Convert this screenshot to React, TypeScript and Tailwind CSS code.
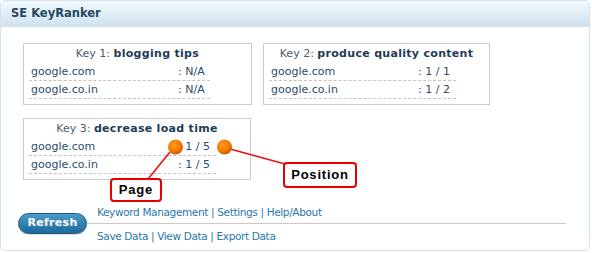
import React from "react";

type Row = { engine: string; value: string };
type KeyBox = { label: string; phrase: string; width: string; rowWidth: string; rows: Row[] };

const boxesTop: KeyBox[] = [
  {
    label: "Key 1:",
    phrase: "blogging tips",
    width: "w-[229px]",
    rowWidth: "w-[181px]",
    rows: [
      { engine: "google.com", value: ": N/A" },
      { engine: "google.co.in", value: ": N/A" }
    ]
  },
  {
    label: "Key 2:",
    phrase: "produce quality content",
    width: "w-[227px]",
    rowWidth: "w-[187px]",
    rows: [
      { engine: "google.com", value: ": 1 / 1" },
      { engine: "google.co.in", value: ": 1 / 2" }
    ]
  }
];

const boxBottom: KeyBox = {
  label: "Key 3:",
  phrase: "decrease load time",
  width: "w-[228px]",
  rowWidth: "w-[187px]",
  rows: [
    { engine: "google.com", value: ": 1 / 5" },
    { engine: "google.co.in", value: ": 1 / 5" }
  ]
};

function KeyCard({ box }: { box: KeyBox }) {
  return (
    <div className={`${box.width} border border-[#cccccc] bg-white pb-[5px]`}>
      <div className="h-[19px] text-center leading-[19px] text-[11px] text-[#4c5c6c]">
        {box.label} <span className="font-bold text-[#1f3b56] tracking-[0.3px]">{box.phrase}</span>
      </div>
      {box.rows.map((row) => (
        <div
          key={row.engine}
          className={`${box.rowWidth} ml-[5px] flex h-[18px] border-b border-dashed border-[#c4c4c4] text-[11px] leading-[17px] text-[#2a4c6e]`}
        >
          <span className="w-[149px] pl-[2px]">{row.engine}</span>
          <span>{row.value}</span>
        </div>
      ))}
    </div>
  );
}

function Callout({ text, className }: { text: string; className: string }) {
  return (
    <div
      className={`absolute flex items-center justify-center rounded-[4px] border-2 border-[#e80000] bg-white text-[13px] font-bold tracking-[0.8px] text-black ${className}`}
      style={{ fontFamily: '"Liberation Sans", Arial, sans-serif' }}
    >
      {text}
    </div>
  );
}

export default function App() {
  return (
    <div
      className="relative h-[253px] w-[592px] bg-white"
      style={{ fontFamily: '"DejaVu Sans", Verdana, sans-serif' }}
    >
      <div className="h-[251px] w-[590px] overflow-hidden rounded-[5px] border border-[#d2e3ed] bg-white">
        <div className="flex h-[26px] items-center bg-gradient-to-b from-[#f3f9fe] to-[#cde2ee] pl-[10px]">
          <span className="text-[11.5px] font-bold text-[#274761]">SE KeyRanker</span>
        </div>

        <div className="pl-[17px] pt-[16px]">
          <div className="ml-[5px] flex gap-[11px]">
            {boxesTop.map((box) => (
              <KeyCard key={box.label} box={box} />
            ))}
          </div>
          <div className="ml-[5px] mt-[13px]">
            <KeyCard box={boxBottom} />
          </div>

          <div className="mt-[23px] flex">
            <button
              type="button"
              className="mt-[10px] h-[21px] w-[69px] self-start rounded-full border border-[#1b5b82] bg-gradient-to-b from-[#4a9ccb] to-[#1d6898] text-[11px] font-bold tracking-[0.3px] text-white shadow-[0_1px_1px_rgba(0,0,0,0.15)]"
            >
              Refresh
            </button>
            <div className="w-[479px] text-[10.5px] tracking-[-0.35px] text-[#2877b0]">
              <div className="h-[21px] border-b border-[#c9c9c9] pl-[10px] leading-[19px]">
                Keyword Management | Settings | Help/About
              </div>
              <div className="pl-[10px] pt-[4px] leading-[17px]">Save Data | View Data | Export Data</div>
            </div>
          </div>
        </div>
      </div>

      <svg className="pointer-events-none absolute left-0 top-0" width="592" height="253">
        <defs>
          <radialGradient id="dot" cx="40%" cy="35%" r="65%">
            <stop offset="0%" stopColor="#ff9a1a" />
            <stop offset="70%" stopColor="#f07800" />
            <stop offset="100%" stopColor="#c45c00" />
          </radialGradient>
        </defs>
        <line x1="170" y1="152" x2="148" y2="179" stroke="#f01010" strokeWidth="1.6" />
        <line x1="230" y1="149" x2="285" y2="164" stroke="#f01010" strokeWidth="1.6" />
        <circle cx="175.5" cy="147" r="7.5" fill="url(#dot)" />
        <circle cx="224.5" cy="147" r="7.5" fill="url(#dot)" />
      </svg>

      <Callout text="Page" className="left-[110px] top-[178px] h-[24px] w-[52px]" />
      <Callout text="Position" className="left-[283px] top-[162px] h-[26px] w-[74px]" />
    </div>
  );
}
